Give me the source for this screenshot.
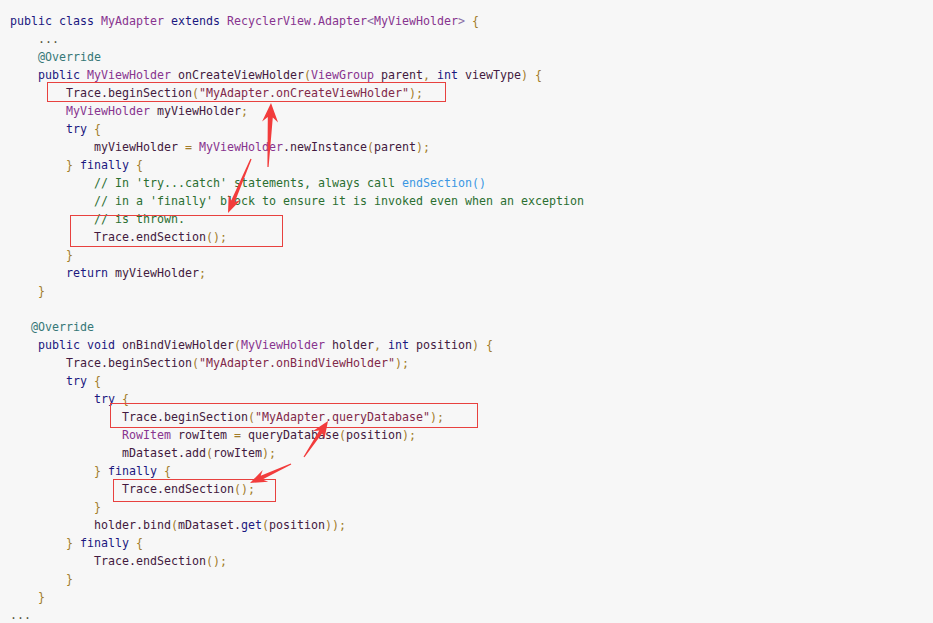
import React from 'react';

const KEYWORDS = new Set(['public', 'class', 'extends', 'void', 'int', 'try', 'finally', 'return', 'get']);
const TYPES = new Set(['MyAdapter', 'RecyclerView', 'Adapter', 'MyViewHolder', 'ViewGroup', 'RowItem']);

const code: string[] = [
  'public class MyAdapter extends RecyclerView.Adapter<MyViewHolder> {',
  '    ...',
  '    @Override',
  '    public MyViewHolder onCreateViewHolder(ViewGroup parent, int viewType) {',
  '        Trace.beginSection("MyAdapter.onCreateViewHolder");',
  '        MyViewHolder myViewHolder;',
  '        try {',
  '            myViewHolder = MyViewHolder.newInstance(parent);',
  '        } finally {',
  "            // In 'try...catch' statements, always call endSection()",
  "            // in a 'finally' block to ensure it is invoked even when an exception",
  '            // is thrown.',
  '            Trace.endSection();',
  '        }',
  '        return myViewHolder;',
  '    }',
  '',
  '   @Override',
  '    public void onBindViewHolder(MyViewHolder holder, int position) {',
  '        Trace.beginSection("MyAdapter.onBindViewHolder");',
  '        try {',
  '            try {',
  '                Trace.beginSection("MyAdapter.queryDatabase");',
  '                RowItem rowItem = queryDatabase(position);',
  '                mDataset.add(rowItem);',
  '            } finally {',
  '                Trace.endSection();',
  '            }',
  '            holder.bind(mDataset.get(position));',
  '        } finally {',
  '            Trace.endSection();',
  '        }',
  '    }',
  '...',
];

const tokenRe = /(\/\/.*$)|("[^"]*")|(@\w+)|(\w+)|(\s+)|(.)/g;

const renderLine = (line: string) => {
  if (line.trim() === '...') {
    return <span className="text-[#55553f]">{line}</span>;
  }
  const out: React.ReactNode[] = [];
  let m: RegExpExecArray | null;
  let k = 0;
  let prevType = false;
  tokenRe.lastIndex = 0;
  while ((m = tokenRe.exec(line)) !== null) {
    const t = m[0];
    if (m[1]) {
      const idx = t.indexOf('endSection()');
      if (idx >= 0) {
        out.push(<span key={k++} className="text-[#2b6f31]">{t.slice(0, idx)}</span>);
        out.push(<span key={k++} className="text-[#3b97e3]">endSection()</span>);
      } else {
        out.push(<span key={k++} className="text-[#2b6f31]">{t}</span>);
      }
    } else if (m[2]) {
      out.push(<span key={k++} className="text-[#82294a]">{t}</span>);
    } else if (m[3]) {
      out.push(<span key={k++} className="text-[#367878]">{t}</span>);
    } else if (m[4]) {
      if (KEYWORDS.has(t)) {
        out.push(<span key={k++} className="text-[#1b1880]">{t}</span>);
        prevType = false;
        continue;
      }
      if (TYPES.has(t)) {
        out.push(<span key={k++} className="text-[#88348f]">{t}</span>);
        prevType = true;
        continue;
      }
      out.push(<span key={k++} className="text-[#431a40]">{t}</span>);
      prevType = false;
    } else if (m[5]) {
      out.push(t);
    } else if (t === '.') {
      const next = line.slice(tokenRe.lastIndex).match(/^\w+/);
      const cls = prevType && next && TYPES.has(next[0]) ? 'text-[#88348f]' : 'text-[#431a40]';
      out.push(<span key={k++} className={cls}>{t}</span>);
    } else if (t === '<' || t === '>') {
      out.push(<span key={k++} className="text-[#8a6fa6]">{t}</span>);
      prevType = false;
    } else {
      out.push(<span key={k++} className="text-[#a27c2a]">{t}</span>);
      prevType = false;
    }
  }
  return out;
};

const arrow = (x1: number, y1: number, x2: number, y2: number, hl: number, hw: number, sw: number) => {
  const dx = x2 - x1;
  const dy = y2 - y1;
  const len = Math.hypot(dx, dy);
  const ux = dx / len;
  const uy = dy / len;
  const nx = -uy;
  const ny = ux;
  const bx = x2 - ux * hl;
  const by = y2 - uy * hl;
  const jx = x2 - ux * hl * 0.75;
  const jy = y2 - uy * hl * 0.75;
  const p = (x: number, y: number) => `${x.toFixed(1)},${y.toFixed(1)}`;
  return [
    p(x1 + nx * 0.6, y1 + ny * 0.6),
    p(jx + (nx * sw) / 2, jy + (ny * sw) / 2),
    p(bx + (nx * hw) / 2, by + (ny * hw) / 2),
    p(x2, y2),
    p(bx - (nx * hw) / 2, by - (ny * hw) / 2),
    p(jx - (nx * sw) / 2, jy - (ny * sw) / 2),
    p(x1 - nx * 0.6, y1 - ny * 0.6),
  ].join(' ');
};

const boxes = [
  { x: 47.5, y: 82.5, w: 398, h: 19 },
  { x: 70.5, y: 215.5, w: 212, h: 31 },
  { x: 110.5, y: 403.5, w: 367, h: 24 },
  { x: 113.5, y: 479.5, w: 162, h: 22 },
];

const App: React.FC = () => {
  return (
    <div className="relative w-[933px] h-[623px] overflow-hidden bg-[#f7f7f7]">
      <div className="pt-[12px] pl-[10px] text-[11.63px] font-['DejaVu_Sans_Mono',monospace]">
        {code.map((line, i) => (
          <div key={i} className="h-[18px] leading-[18px] whitespace-pre">
            {line === '' ? ' ' : renderLine(line)}
          </div>
        ))}
      </div>

      {/* annotations */}
      <svg className="absolute left-0 top-0" width="933" height="623" viewBox="0 0 933 623">
        {boxes.map((b, i) => (
          <rect key={i} x={b.x} y={b.y} width={b.w} height={b.h} fill="none" stroke="#e8413f" strokeWidth="1" />
        ))}
        <polygon points={arrow(268, 167, 271, 103, 19, 16, 5)} fill="#f23c3c" />
        <polygon points={arrow(251, 159, 228, 213, 17, 13, 4)} fill="#f23c3c" />
        <polygon points={arrow(304, 457, 328, 421, 17, 14, 4)} fill="#f23c3c" />
        <polygon points={arrow(291, 464, 250, 483, 17, 13, 4)} fill="#f23c3c" />
      </svg>
    </div>
  );
};

export default App;
